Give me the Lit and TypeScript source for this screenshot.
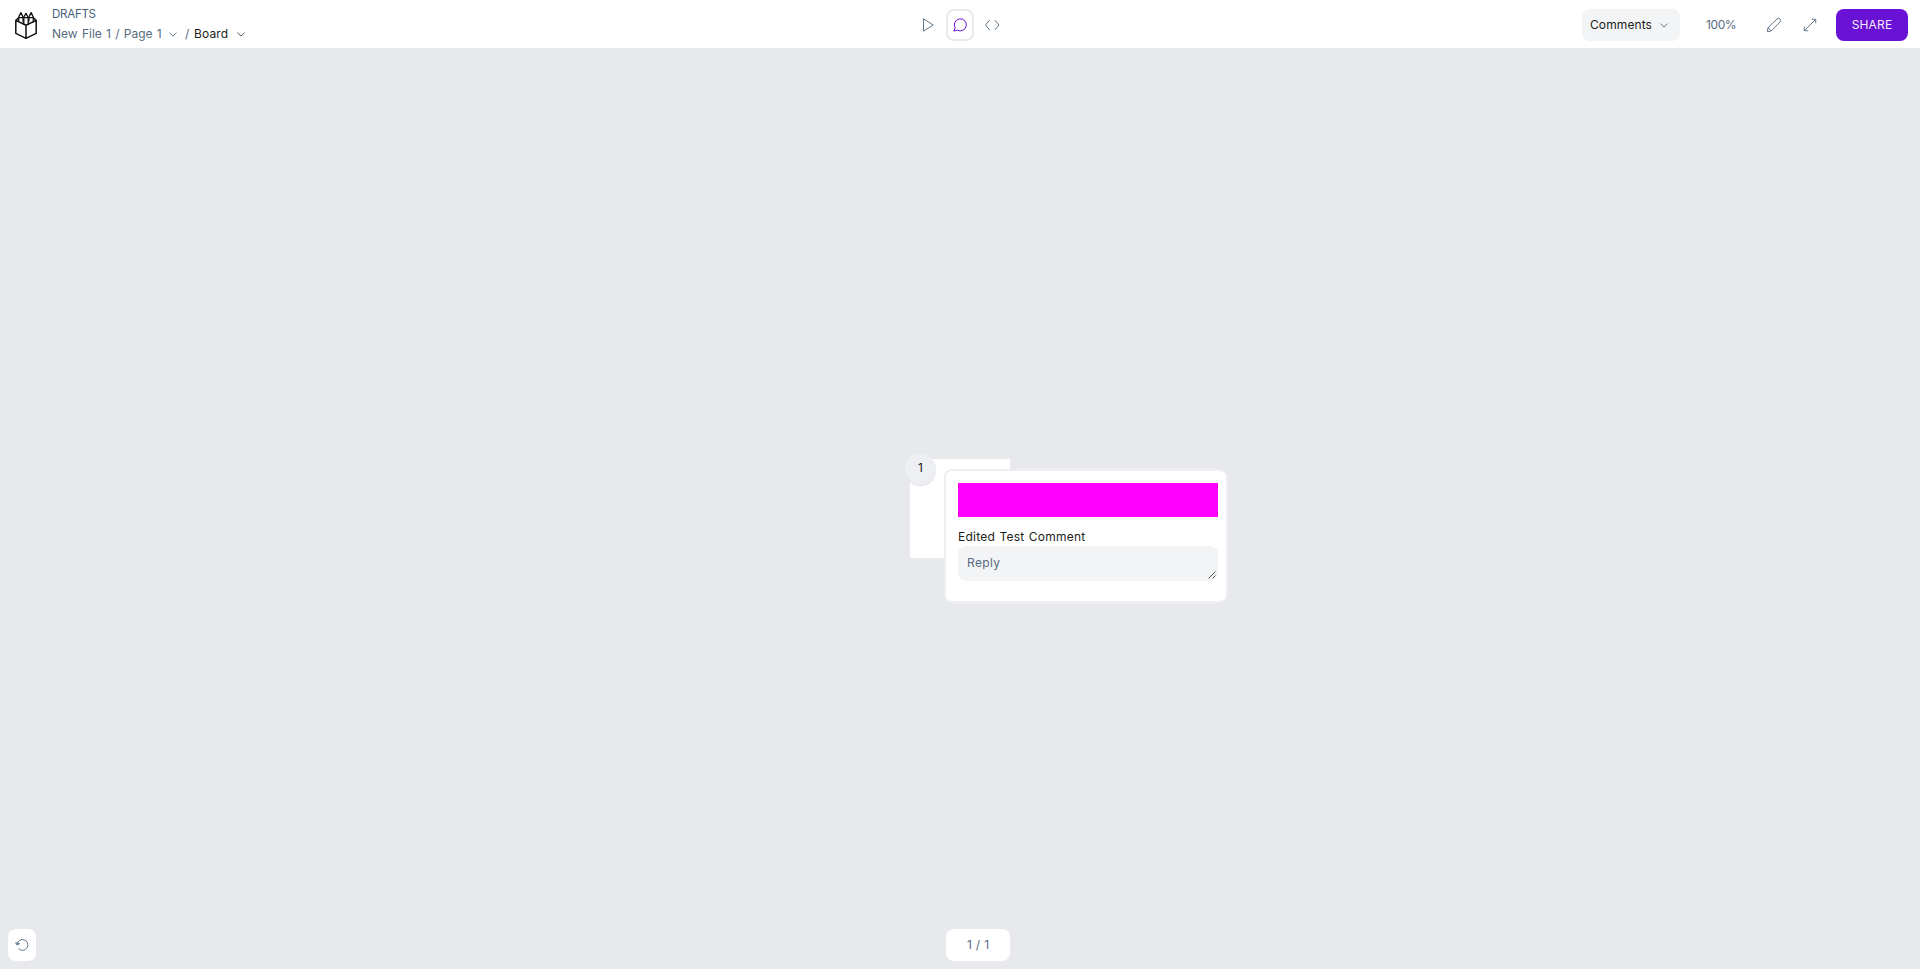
import { LitElement, html, svg, css } from "lit";
import { customElement } from "lit/decorators.js";

const chevron = html`<svg class="chevron" width="8" height="5" viewBox="0 0 8 5"><path d="M.5.7 4 4.1 7.5.7" /></svg>`;

const logo = html`<svg class="logo" width="24" height="28" viewBox="0 0 24 28">
  <path d="M1.8 8.4 12 13.2l10.2-4.8v13L12 26.4 1.8 21.4ZM12 13.2v13.2M1.8 8.4l2.8-2.6M22.2 8.4l-2.8-2.6" />
  ${[6.9, 12, 17.1].map((x) => svg`<path class="pencil" d="M${x - 2.2} ${x === 12 ? 12.4 : 9.6}V5L${x} ${x === 12 ? 1.4 : 0.6}l2.2 4.4V${x === 12 ? 12.4 : 10.6}M${x - 2.2} 5.6h4.4" />`)}
</svg>`;

@customElement("app-root")
export class AppRoot extends LitElement {
  static styles = css`
    :host {
      display: flex;
      flex-direction: column;
      height: 969px;
      overflow: hidden;
      background: #e8e9ed;
      font: 12px/16px Inter, "Liberation Sans", sans-serif;
      color: #576b80;
    }
    * { box-sizing: border-box; }
    svg { display: block; fill: none; stroke: #64788c; stroke-width: 1; flex: none; }
    header {
      height: 48px;
      flex: none;
      display: grid;
      grid-template-columns: 1fr 96px 1fr;
      grid-template-rows: 46px;
      padding-top: 2px;
      align-items: center;
      background: #fff;
    }
    .left { display: flex; align-items: center; padding-left: 14px; }
    .logo { stroke: #111; stroke-width: 1.5; stroke-linejoin: round; margin-top: 1px; }
    .pencil { stroke-width: 1.3; }
    .crumbs { margin: 0 0 0 14px; white-space: nowrap; }
    .project { height: 18px; line-height: 15px; font-size: 11.5px; letter-spacing: -0.25px; color: #46607a; }
    .path { display: flex; align-items: center; height: 18px; }
    .file { width: 117px; letter-spacing: 0; word-spacing: 0.9px; }
    .slash { margin-left: 8px; width: 9px; }
    .board { width: 43px; color: #1b1d20; letter-spacing: 0.15px; }
    .dark { stroke: #4a5560; }
    .modes { display: flex; align-items: center; justify-content: center; }
    .mode { flex: none; width: 32px; height: 32px; display: grid; place-items: center; }
    .selected { width: 28px; margin: 0 2px; border: 2px solid #e8e9ed; border-radius: 8px; }
    .selected svg { stroke: #6911d4; }
    .right { display: flex; align-items: center; justify-content: flex-end; padding-right: 12px; }
    .select {
      width: 98px; height: 32px; padding: 0 12px 0 8px; border-radius: 8px;
      display: flex; align-items: center; justify-content: space-between;
      background: #f3f4f5; color: #1b1d20; letter-spacing: 0.1px;
    }
    .zoom { width: 30px; margin-left: 26px; letter-spacing: -0.4px; }
    .edit { margin-left: 30px; }
    .expand { margin-left: 21px; }
    .share {
      width: 72px; height: 32px; margin-left: 19px; border: 0; padding: 0; border-radius: 8px;
      background: #6911d4; color: #f3ecfb; font: inherit; letter-spacing: 0.15px;
    }
    main { flex: 1; position: relative; }
    .artboard { position: absolute; left: 910px; top: 411px; width: 100px; height: 99px; background: #fff; }
    .pin {
      position: absolute; left: 905px; top: 406px; width: 31px; height: 31px; border-radius: 50%;
      background: #eeeff2; box-shadow: 0 1px 1px #dfe1e7; color: #1b1d20;
      text-align: center; line-height: 28px;
    }
    .thread {
      position: absolute; left: 944px; top: 421px; width: 284px; height: 134px;
      padding: 12px 8px 12px 12px; border: 2px solid #eeeff2; border-radius: 8px; background: #fff;
    }
    .author { height: 34px; background: #f0f; }
    .comment { margin-top: 12px; height: 17px; color: #1b1d20; white-space: nowrap; letter-spacing: 0.27px; word-spacing: 0.5px; }
    .reply {
      display: flex; height: 35px; padding: 9px 10px 0 9px; border-radius: 8px; background: #f3f4f5;
      position: relative; letter-spacing: 0.35px;
    }
    .grip { position: absolute; right: 2px; bottom: 2px; stroke: #444; stroke-width: 0.9; }
    .reset, .counter {
      position: absolute; top: 881px; height: 32px; border-radius: 8px; background: #fff;
      display: grid; place-items: center;
    }
    .reset { left: 8px; width: 28px; }
    .counter { left: 946px; width: 64px; word-spacing: 0.7px; }
  `;

  render() {
    return html`
      <header>
        <div class="left">
          ${logo}
          <div class="crumbs">
            <div class="project">DRAFTS</div>
            <div class="path"><span class="file">New File 1 / Page 1</span>${chevron}<span class="slash">/</span><span class="board">Board</span><svg class="dark" width="8" height="5" viewBox="0 0 8 5"><path d="M.5.7 4 4.1 7.5.7" /></svg></div>
          </div>
        </div>
        <div class="modes">
          <span class="mode"><svg width="12" height="14" viewBox="0 0 12 14"><path d="M1.5.8v12.4L11.2 7Z" /></svg></span>
          <span class="mode selected"><svg width="14" height="14" viewBox="0 0 14 14"><path d="M.9 13.1 2.1 9.8A6 6 0 1 1 4.4 12.1Z" /></svg></span>
          <span class="mode"><svg width="16" height="12" viewBox="0 0 16 12"><path d="M5.7 1 1.5 6l4.2 5M10.8 1 15 6l-4.2 5" /></svg></span>
        </div>
        <div class="right">
          <div class="select"><span class="label">Comments</span>${chevron}</div>
          <span class="zoom">100%</span>
          <svg class="edit" width="16" height="16" viewBox="0 0 16 16"><path d="M1.3 14.7 2 10.8 11 1.9a2.2 2.2 0 0 1 3.1 3.1L5.2 14ZM2 10.8 5.2 14" /></svg>
          <svg class="expand" width="14" height="14" viewBox="0 0 14 14"><path d="M1.3 12.7 12.7 1.3M8.8 1.3h3.9v3.9M1.3 8.8v3.9h3.9" /></svg>
          <button class="share">SHARE</button>
        </div>
      </header>
      <main>
        <div class="artboard"></div>
        <div class="pin">1</div>
        <div class="thread">
          <div class="author"></div>
          <div class="comment">Edited Test Comment</div>
          <div class="reply"><span>Reply</span><svg class="grip" width="8" height="8" viewBox="0 0 8 8"><path d="M.5 7.5l7-7M4.5 7.5l3-3" /></svg></div>
        </div>
        <div class="reset"><svg width="14" height="14" viewBox="0 0 14 14"><path d="M2.1 6.9a5.4 5.4 0 1 1 1.5 3.8M.6 4.7l1.5 2.4 2.5-1.5Z" /></svg></div>
        <div class="counter">1 / 1</div>
      </main>
    `;
  }
}
